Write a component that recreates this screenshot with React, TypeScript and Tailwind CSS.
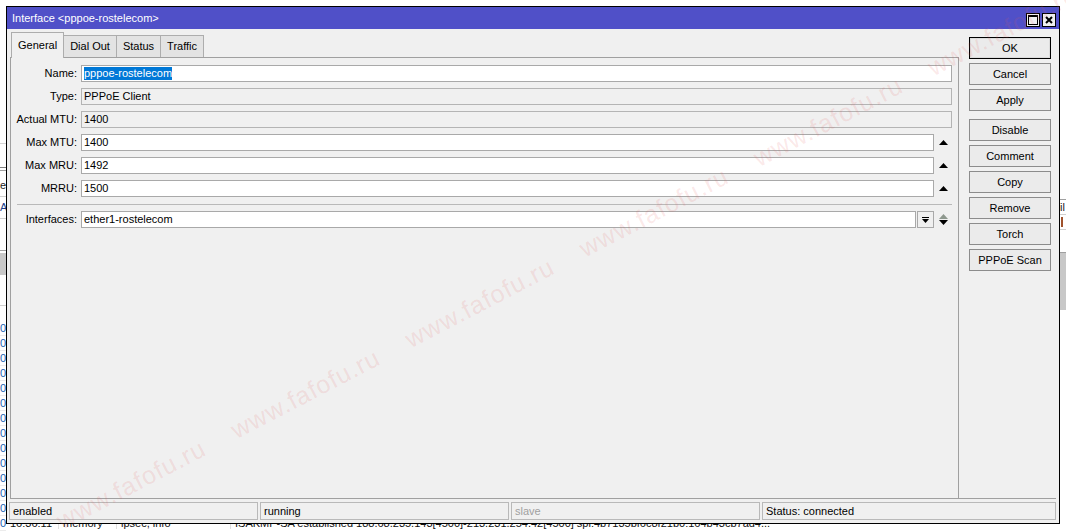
import React from 'react';

const UpArrow = () => (
  <svg width="9" height="5" viewBox="0 0 9 5">
    <path d="M4.5 0 L9 5 L0 5 Z" fill="#000" />
  </svg>
);

const UpDownArrow = () => (
  <svg width="9" height="11" viewBox="0 0 9 11">
    <path d="M4.5 0 L9 5 L0 5 Z" fill="#8e988e" />
    <path d="M0 6 L9 6 L4.5 11 Z" fill="#000" />
  </svg>
);

const DropIcon = () => (
  <svg width="7" height="6" viewBox="0 0 7 6">
    <rect x="0" y="0" width="7" height="1" fill="#000" />
    <path d="M0 2 L7 2 L3.5 6 Z" fill="#000" />
  </svg>
);

const Label: React.FC<{ children: React.ReactNode }> = ({ children }) => (
  <div className="w-[66px] shrink-0 text-right whitespace-nowrap text-black">{children}</div>
);

const Input: React.FC<{ children?: React.ReactNode; disabled?: boolean }> = ({ children, disabled }) => (
  <div
    className={`h-[17px] flex-1 min-w-0 flex items-center pl-[2px] border whitespace-nowrap text-black ${
      disabled ? 'bg-[#f0f0f0] border-[#b4b4b4]' : 'bg-white border-[#a9a9a9]'
    }`}
  >
    {children}
  </div>
);

const Btn: React.FC<{ children: React.ReactNode; primary?: boolean; className?: string }> = ({ children, primary, className = '' }) => (
  <div
    className={`h-[22px] flex items-center justify-center bg-[#ebebeb] border text-black ${
      primary ? 'border-black shadow-[inset_0_0_0_1px_#dcdcdc]' : 'border-[#8c8c8c]'
    } ${className}`}
  >
    {children}
  </div>
);

const zeroRows = Array.from({ length: 14 });

export default function App() {
  return (
    <div className="relative w-[1066px] h-[532px] overflow-hidden bg-white font-['Liberation_Sans',Arial,sans-serif] text-[11px] leading-none">
      {/* background desktop behind the window */}
      <div className="flex h-[532px]">
        <div className="w-[6px] flex flex-col overflow-hidden">
          <div className="h-[143px]" />
          <div className="h-[1px] bg-[#d4d4d4]" />
          <div className="h-[23px]" />
          <div className="h-[1px] bg-[#808080]" />
          <div className="h-[2px]" />
          <div className="h-[1px] bg-[#a0a0a0]" />
          <div className="h-[7px]" />
          <div className="h-[14px] flex items-center whitespace-nowrap text-[#222]">es</div>
          <div className="h-[4px]" />
          <div className="h-[1px] bg-[#d0d0d0]" />
          <div className="h-[3px]" />
          <div className="h-[15px] flex items-center whitespace-nowrap text-[#1d3f8a]">A</div>
          <div className="h-[3px]" />
          <div className="h-[1px] bg-[#d0d0d0]" />
          <div className="h-[31px]" />
          <div className="h-[1px] bg-[#a0a0a0]" />
          <div className="h-[2px]" />
          <div className="h-[22px] bg-[#c8c8c8]" />
          <div className="h-[30px]" />
          <div className="h-[1px] bg-[#d0d0d0]" />
          <div className="h-[15px]" />
          {zeroRows.map((_, i) => (
            <div key={i} className="h-[15px] flex items-center justify-end border-b border-[#ececec] text-[#1a5fb4]">
              0
            </div>
          ))}
        </div>
        <div className="flex-1 flex flex-col justify-end">
          <div className="h-[15px] mb-[1px] flex items-center whitespace-nowrap text-[#111]">
            <span className="w-[52px] pl-[4px]">16:36:11</span>
            <span className="w-[58px] pl-[4px] border-l border-[#e0e0e0]">memory</span>
            <span className="w-[114px] pl-[4px] border-l border-[#e0e0e0]">ipsec, info</span>
            <span className="pl-[4px] border-l border-[#e0e0e0]">
              ISAKMP-SA established 188.68.235.143[4500]-213.231.254.42[4500] spi:4b7135bf6c8f21b0:164b43cb7ad4...
            </span>
          </div>
        </div>
        <div className="w-[6px] flex flex-col overflow-hidden">
          <div className="h-[199px]" />
          <div className="h-[1px] bg-[#a0a0a0]" />
          <div className="h-[14px] flex items-center whitespace-nowrap text-[#222]">il</div>
          <div className="h-[1px] bg-[#d0d0d0]" />
          <div className="h-[14px] flex items-center pl-[1px]">
            <div className="w-[2px] h-[10px] bg-[#a0522d]" />
          </div>
          <div className="h-[1px] bg-[#d0d0d0]" />
          <div className="h-[22px]" />
          <div className="h-[1px] bg-[#a0a0a0]" />
          <div className="h-[57px] bg-[#c8c8c8]" />
        </div>
      </div>

      {/* window */}
      <div className="absolute left-[6px] top-[6px] w-[1054px] h-[518px] border border-black bg-[#f0f0f0] flex flex-col">
        <div className="h-[22px] shrink-0 bg-[#5050c8] flex items-center pl-[5px] pr-[3px]">
          <span className="text-white whitespace-nowrap">Interface &lt;pppoe-rostelecom&gt;</span>
          <div className="ml-auto flex gap-[2px] mt-[3px]">
            <div className="w-[14px] h-[14px] bg-[#f0f0f0] border border-black flex items-center justify-center">
              <svg width="10" height="10" viewBox="0 0 10 10">
                <rect x="0.5" y="0.5" width="9" height="9" fill="none" stroke="#000" />
                <rect x="0" y="0" width="10" height="2" fill="#000" />
              </svg>
            </div>
            <div className="w-[14px] h-[14px] bg-[#f0f0f0] border border-black flex items-center justify-center">
              <svg width="8" height="8" viewBox="0 0 8 8">
                <path d="M1 1 L7 7 M7 1 L1 7" stroke="#000" strokeWidth="2" />
              </svg>
            </div>
          </div>
        </div>

        {/* body */}
        <div className="flex-1 min-h-0 flex mx-[3px] border-b border-[#a0a0a0]">
          <div className="w-[949px] shrink-0 flex flex-col pt-[3px]">
            <div className="h-[25px] shrink-0 flex items-end pl-[1px]">
              <div className="relative z-10 h-[26px] mb-[-1px] px-[6px] flex items-center bg-[#f0f0f0] border border-b-0 border-[#adadad] text-black">
                General
              </div>
              <div className="h-[22px] px-[6px] flex items-center bg-[#e3e3e3] border border-l-0 border-b-0 border-[#adadad] text-black">
                Dial Out
              </div>
              <div className="h-[22px] px-[6px] flex items-center bg-[#e3e3e3] border border-l-0 border-b-0 border-[#adadad] text-black">
                Status
              </div>
              <div className="h-[22px] px-[6px] flex items-center bg-[#e3e3e3] border border-l-0 border-b-0 border-[#adadad] text-black">
                Traffic
              </div>
            </div>
            <div className="flex-1 border border-b-0 border-[#a0a0a0] pt-[7px] pr-[6px] flex flex-col">
              <div className="flex flex-col gap-[6px]">
                <div className="flex items-center h-[17px] gap-[4px]">
                  <Label>Name:</Label>
                  <Input>
                    <span className="bg-[#0078d7] text-white h-[13px] flex items-center">pppoe-rostelecom</span>
                  </Input>
                </div>
                <div className="flex items-center h-[17px] gap-[4px]">
                  <Label>Type:</Label>
                  <Input disabled>PPPoE Client</Input>
                </div>
                <div className="flex items-center h-[17px] gap-[4px]">
                  <Label>Actual MTU:</Label>
                  <Input disabled>1400</Input>
                </div>
                {[
                  ['Max MTU:', '1400'],
                  ['Max MRU:', '1492'],
                  ['MRRU:', '1500'],
                ].map(([l, v]) => (
                  <div key={l} className="flex items-center h-[17px] gap-[4px]">
                    <Label>{l}</Label>
                    <Input>{v}</Input>
                    <div className="w-[18px] shrink-0 flex justify-center ml-[-4px] pl-[1px]">
                      <UpArrow />
                    </div>
                  </div>
                ))}
              </div>
              <div className="mt-[7px] ml-[6px] h-[1px] bg-[#b9b9b9]" />
              <div className="mt-[6px] flex items-center h-[17px] gap-[4px]">
                <Label>Interfaces:</Label>
                <Input>ether1-rostelecom</Input>
                <div className="ml-[-3px] w-[17px] h-[17px] shrink-0 bg-[#f0f0f0] border border-[#a9a9a9] flex items-center justify-center">
                  <DropIcon />
                </div>
                <div className="w-[18px] shrink-0 flex justify-center ml-[-4px] pl-[1px]">
                  <UpDownArrow />
                </div>
              </div>
            </div>
          </div>

          <div className="ml-[10px] w-[82px] shrink-0 pt-[8px] flex flex-col gap-[4px]">
            <Btn primary>OK</Btn>
            <Btn>Cancel</Btn>
            <Btn>Apply</Btn>
            <Btn className="mt-[4px]">Disable</Btn>
            <Btn>Comment</Btn>
            <Btn>Copy</Btn>
            <Btn>Remove</Btn>
            <Btn>Torch</Btn>
            <Btn>PPPoE Scan</Btn>
          </div>
        </div>

        {/* status bar */}
        <div className="h-[24px] shrink-0 flex gap-[2px] pl-[2px] pr-[3px] py-[3px]">
          <div className="w-[249px] flex items-center pl-[3px] border border-[#b9b9b9] text-black">enabled</div>
          <div className="w-[249px] flex items-center pl-[3px] border border-[#b9b9b9] text-black">running</div>
          <div className="w-[249px] flex items-center pl-[3px] border border-[#b9b9b9] text-[#a0a0a0]">slave</div>
          <div className="flex-1 flex items-center pl-[3px] border border-[#b9b9b9] text-black">Status: connected</div>
        </div>
      </div>

      {/* watermark */}
      <div className="pointer-events-none absolute left-[58px] top-[508px] origin-left rotate-[-27.5deg] whitespace-nowrap flex gap-[32px] text-[25px] tracking-[1px] leading-[28px] text-[rgba(225,90,90,0.14)]">
        {Array.from({ length: 6 }).map((_, i) => (
          <span key={i}>www.fafofu.ru</span>
        ))}
      </div>
    </div>
  );
}
